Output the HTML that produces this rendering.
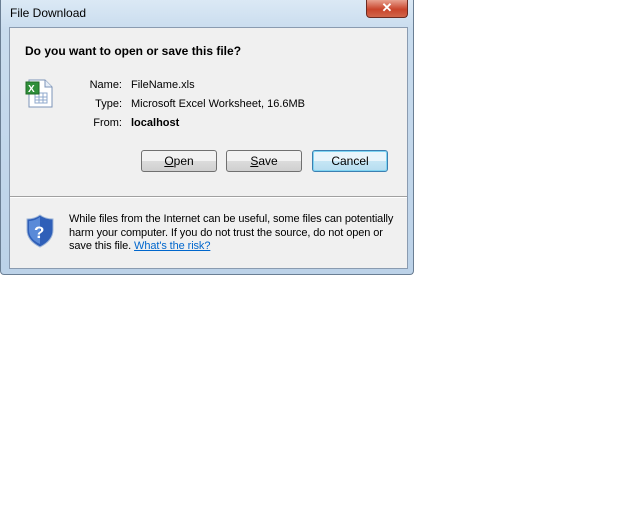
<!DOCTYPE html>
<html><head><style>
body{margin:0;width:640px;height:512px;background:#fff;position:relative;font-family:"Liberation Sans",sans-serif;font-size:11px;color:#000;overflow:hidden}
.win{position:absolute;left:0;top:0;width:412px;height:274px;border:1px solid #6a7e93;border-top:none;border-radius:0 0 4px 4px;background:linear-gradient(180deg,#dbe9f5 0,#c9dcee 30px,#bcd2e8 100%)}
.title{position:absolute;left:9px;top:6px;font-size:12px;color:#000}
.close{position:absolute;left:365px;top:0;width:40px;height:17px;border:1px solid #6b2b22;border-top:none;border-radius:0 0 4px 4px;background:linear-gradient(#e8a18f,#c9452c 55%,#d0654a);color:#fff;font-size:13px;font-weight:bold;text-align:center;line-height:16px}
.panel{position:absolute;left:8px;top:27px;width:397px;height:240px;border:1px solid #8a9bb0;background:#f0f0f0}
.sep{position:absolute;left:0;top:168px;width:397px;height:1px;background:#a0a0a0;border-bottom:1px solid #fff}
.q{position:absolute;left:15px;top:16px;font-size:12px;font-weight:bold}
.lab{position:absolute;width:112px;text-align:right;left:0}
.val{position:absolute;left:121px}
.btn{position:absolute;top:122px;width:74px;height:20px;border:1px solid #707070;border-radius:3px;background:linear-gradient(#f2f2f2 50%,#dcdcdc 50%,#cfcfcf);text-align:center;line-height:20px;font-size:12px}
.btn.def{border-color:#3c7fb1;box-shadow:inset 0 0 0 1px #7fd4f2;background:linear-gradient(#e9f5fb 50%,#c6e6f5 50%,#b6ddf0)}
.warn{position:absolute;left:59px;top:185px;line-height:13.5px;width:345px;letter-spacing:-0.1px}
a{color:#0066cc;text-decoration:underline}
</style></head><body>
<div class="win">
<div class="title">File Download</div>
<div class="close">✕</div>
<div class="panel">
<div class="q">Do you want to open or save this file?</div>
<svg style="position:absolute;left:15px;top:51px" width="32" height="30" viewBox="0 0 32 30">
<path d="M4 1h16l7 7v20H4z" fill="#fff" stroke="#7d94b8"/><path d="M20 1v7h7" fill="#e6eef8" stroke="#7d94b8"/>
<rect x="10" y="14" width="12" height="10" fill="none" stroke="#8fa9cc"/><path d="M10 18h12M10 21h12M14 14v10M18 14v10" stroke="#8fa9cc"/>
<rect x="1" y="3" width="13" height="12" fill="#2f8f3a" stroke="#1d6b25"/><text x="3" y="13" font-size="10" font-weight="bold" fill="#fff" font-family="Liberation Sans">X</text>
</svg>
<div class="lab" style="top:51px">Name:</div><div class="val" style="top:51px">FileName.xls</div>
<div class="lab" style="top:70px">Type:</div><div class="val" style="top:70px">Microsoft Excel Worksheet, 16.6MB</div>
<div class="lab" style="top:89px">From:</div><div class="val" style="top:89px;font-weight:bold">localhost</div>
<div class="btn" style="left:131px"><u>O</u>pen</div>
<div class="btn" style="left:216px"><u>S</u>ave</div>
<div class="btn def" style="left:302px">Cancel</div>
<div class="sep"></div>
<svg style="position:absolute;left:16px;top:186px" width="28" height="34" viewBox="0 0 28 34">
<path d="M14 1C10 4 5 5 1 5v11c0 9 7 14 13 17 6-3 13-8 13-17V5c-4 0-9-1-13-4z" fill="#2f5fb8" stroke="#9fb6d8"/>
<path d="M14 3C10 6 6 7 3 7v9c0 7 5 11 11 14z" fill="#5a8ad8"/>
<text x="8" y="24" font-size="17" font-weight="bold" fill="#fff" font-family="Liberation Sans">?</text>
</svg>
<div class="warn">While files from the Internet can be useful, some files can potentially<br>harm your computer. If you do not trust the source, do not open or<br>save this file. <a>What's the risk?</a></div>
</div>
</div>
</body></html>
